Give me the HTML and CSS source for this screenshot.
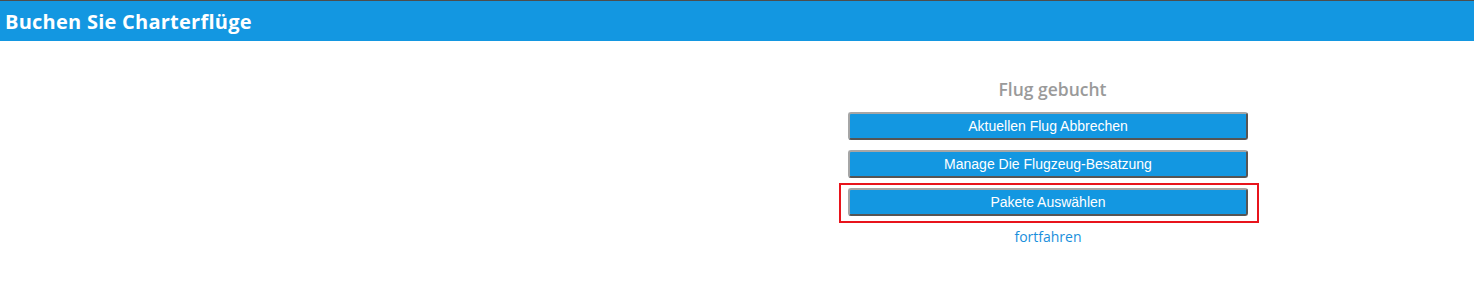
FILE: index.html
```html
<!DOCTYPE html>
<html lang="de">
<head>
    <meta charset="UTF-8">
    <meta name="viewport" content="width=device-width, initial-scale=1.0">
    <title>Buchen Sie Charterflüge</title>
    <link rel="stylesheet" href="styles.css">
</head>
<body>
    <div class="page-header">
        <h1>Buchen Sie Charterflüge</h1>
    </div>

    <div class="page-body">
        <div class="booking-panel">
            <h2>Flug gebucht</h2>

            <div class="action-list">
                <div class="action-item">
                    <button type="button">Aktuellen Flug Abbrechen</button>
                </div>
                <div class="action-item">
                    <button type="button">Manage Die Flugzeug-Besatzung</button>
                </div>
                <div class="action-item highlighted">
                    <button type="button">Pakete Auswählen</button>
                </div>
            </div>

            <a href="#" class="continue-link">fortfahren</a>
        </div>
    </div>
</body>
</html>
```

FILE: styles.css
```css
body {
    margin: 0;
    font-family: 'Open Sans', sans-serif;
    background-color: #fff;
}

.page-header {
    background-color: #1397e1;
    border-top: 1px solid #4d4d4d;
    height: 40px;
    display: flex;
    align-items: center;
    padding-left: 5px;
}

.page-header h1 {
    margin: 0;
    color: #fff;
    font-size: 20px;
    font-weight: 700;
    letter-spacing: 0.25px;
}

.page-body {
    display: flex;
    padding-left: 848px;
    padding-top: 36px;
}

.booking-panel {
    width: 400px;
    display: flex;
    flex-direction: column;
    align-items: center;
}

.booking-panel h2 {
    margin: 0 0 10px 0;
    color: #9a9a9a;
    font-size: 17.5px;
    font-weight: 600;
    line-height: 25px;
    padding-left: 9px;
}

.action-list {
    display: flex;
    flex-direction: column;
    gap: 10px;
    width: 100%;
}

.action-item {
    position: relative;
}

/* red highlight frame around the selected action */
.action-item.highlighted::before {
    content: "";
    position: absolute;
    top: -5px;
    bottom: -7px;
    left: -9px;
    right: -11px;
    border: 2px solid #e8141c;
    pointer-events: none;
}

.action-item button {
    display: block;
    width: 400px;
    height: 28px;
    background-color: #1397e1;
    color: #fff;
    font-family: 'Liberation Sans', Arial, sans-serif;
    font-size: 14px;
    border-style: solid;
    border-width: 2px;
    border-color: #a6a6a6 #555 #555 #a6a6a6;
    border-radius: 3px;
    cursor: pointer;
    padding: 0;
}

.continue-link {
    margin-top: 11px;
    color: #1a8fdc;
    font-size: 14px;
    text-decoration: none;
}
```
